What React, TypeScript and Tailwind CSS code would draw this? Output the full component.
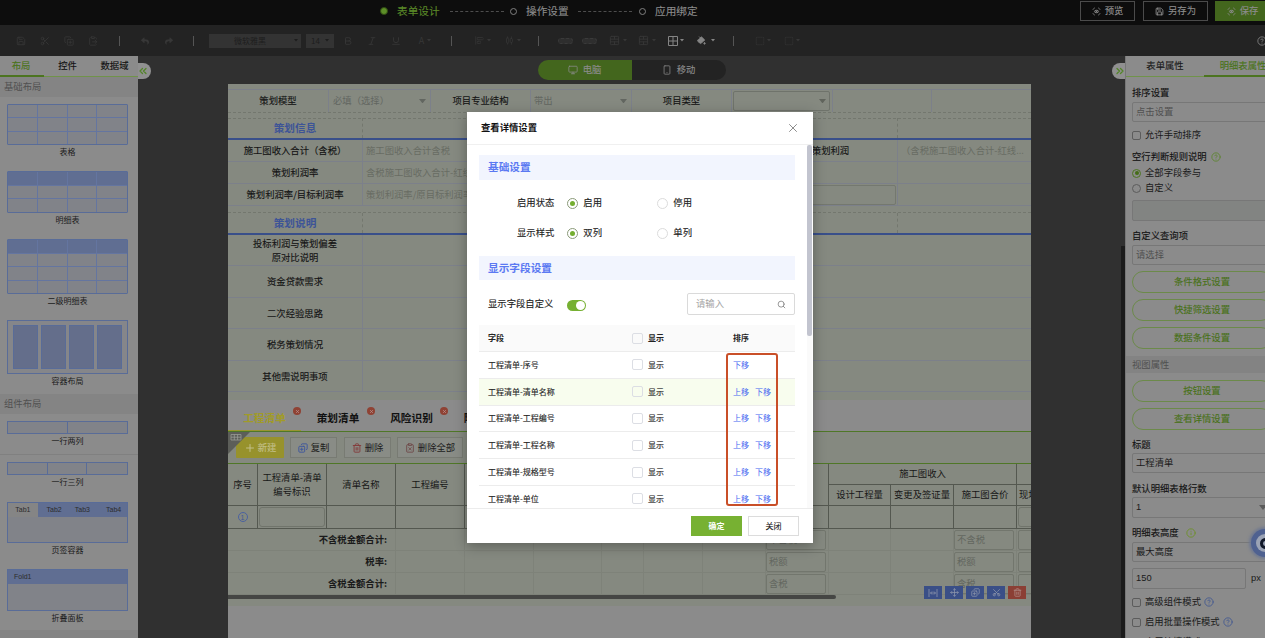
import type { ReactNode } from "react";
import {
  AlignStartVertical,
  AlignHorizontalDistributeCenter,
  Bold,
  CircleHelp,
  ClipboardPaste,
  ClipboardX,
  CopyPlus,
  Info,
  Italic,
  Monitor,
  Move,
  PaintBucket,
  Plus,
  Save,
  Scissors,
  Search,
  Smartphone,
  SquareDashed,
  TableCellsMerge,
  Trash2,
  Underline,
  X,
  ChevronsLeft,
  ChevronsRight,
} from "lucide-react";
import { FaReply, FaShare } from "react-icons/fa";

/* ---------- shared ---------- */

const Caret = ({ className = "" }: { className?: string }) => (
  <svg viewBox="0 0 8 5" className={className}>
    <path d="M0 0H8L4 5Z" fill="currentColor" />
  </svg>
);

const FocusEye = () => (
  <svg viewBox="0 0 10 10" className="size-[9px]" fill="none" stroke="currentColor" strokeWidth="1">
    <path d="M1 3A4.6 4.6 0 0 1 3 1M7 1A4.6 4.6 0 0 1 9 3M9 7A4.6 4.6 0 0 1 7 9M3 9A4.6 4.6 0 0 1 1 7" />
    <ellipse cx="5" cy="5" rx="2.3" ry="1.4" />
    <circle cx="5" cy="5" r=".6" fill="currentColor" />
  </svg>
);

const Strong = ({ children, className = "" }: { children: ReactNode; className?: string }) => (
  <span className={`[-webkit-text-stroke:0.12px_currentColor] ${className}`}>{children}</span>
);

/* ---------- header ---------- */

function Header() {
  return (
    <header className="flex h-[25px] shrink-0 items-start bg-[#0d0d0d] text-[10.67px] text-[#8c8c8c]">
      <div className="flex h-[22px] w-[1080px] items-center pl-[380px]">
        <i className="size-[8px] rounded-full border border-[#2f4a12] bg-[#5d8f28]" />
        <Strong className="ml-[9px] w-[43px] text-[#5b8a28]">表单设计</Strong>
        <i className="ml-[10px] w-[54px] border-t border-dashed border-[#4d4d4d]" />
        <i className="ml-[6px] size-[7px] rounded-full border border-[#808080]" />
        <Strong className="ml-[9px] w-[43px]">操作设置</Strong>
        <i className="ml-[9px] w-[54px] border-t border-dashed border-[#4d4d4d]" />
        <i className="ml-[7px] size-[7px] rounded-full border border-[#808080]" />
        <Strong className="ml-[9px] w-[43px]">应用绑定</Strong>
      </div>
      <div className="flex w-[185px] overflow-hidden pt-px text-[9.33px]">
        <div className="flex h-5 w-[55px] shrink-0 items-center justify-center gap-[4px] border border-[#4b4b4b]">
          <FocusEye />
          <Strong>预览</Strong>
        </div>
        <div className="ml-2 flex h-5 w-[65px] shrink-0 items-center justify-center gap-[4px] border border-[#4b4b4b]">
          <Save size={9} strokeWidth={2.4} />
          <Strong>另存为</Strong>
        </div>
        <div className="ml-[7px] flex h-5 w-[55px] shrink-0 items-center justify-center gap-[4px] bg-[#43661d]">
          <FocusEye />
          <Strong>保存</Strong>
        </div>
      </div>
    </header>
  );
}

const Slot = ({ children }: { children: ReactNode }) => (
  <div className="flex w-6 shrink-0 items-center justify-center gap-[3px]">{children}</div>
);
const Bar = ({ className }: { className: string }) => (
  <div className={`flex shrink-0 justify-center ${className}`}>
    <i className="h-[10px] w-px bg-[#555]" />
  </div>
);

function Toolbar() {
  return (
    <div className="flex h-[31px] shrink-0 items-center overflow-hidden bg-[#232323] pl-[9px] text-[#373737]">
      <Slot><Save size={10} /></Slot>
      <Slot><Scissors size={10} /></Slot>
      <Slot><CopyPlus size={10} /></Slot>
      <Slot><ClipboardPaste size={10} /></Slot>
      <Bar className="w-7" />
      <Slot><FaReply size={8} /></Slot>
      <Slot><FaShare size={8} /></Slot>
      <Bar className="w-6" />
      <div className="ml-1 flex h-[14px] w-[92px] shrink-0 items-center justify-center bg-[#333] text-[8px] text-[#1d1d1d]">
        <span className="w-[76px] text-center">微软雅黑</span>
        <Caret className="ml-[6px] w-1" />
      </div>
      <div className="ml-[5px] flex h-[14px] w-[28px] shrink-0 items-center justify-center gap-[5px] bg-[#333] text-[8px] text-[#1d1d1d]">
        14
        <Caret className="w-1" />
      </div>
      <div className="w-[2px]" />
      <Slot><Bold size={10} /></Slot>
      <Slot><Italic size={10} /></Slot>
      <Slot><Underline size={10} /></Slot>
      <Slot>
        <span className="ml-[10px] text-[9px]">A</span>
        <Caret className="w-1" />
      </Slot>
      <Bar className="w-[38px]" />
      <div className="w-[1px]" />
      <Slot><AlignStartVertical size={9} /><Caret className="w-1 shrink-0" /></Slot>
      <div className="w-[6px]" />
      <Slot><AlignHorizontalDistributeCenter size={9} /><Caret className="w-1 shrink-0" /></Slot>
      <Bar className="w-[26px]" />
      <div className="w-[2px]" />
      <Slot><i className="h-[6px] w-[15px] rounded-sm border border-dashed border-[#3a3a3a] bg-[#2e2e2e]" /></Slot>
      <Slot><i className="h-[6px] w-[15px] rounded-sm border border-dashed border-[#3a3a3a] bg-[#2e2e2e]" /></Slot>
      <div className="flex w-[26px] items-center justify-end gap-[3px]"><TableCellsMerge size={11} /><Caret className="w-1" /></div>
      <div className="flex w-[29px] items-center justify-end gap-[3px]"><TableCellsMerge size={11} /><Caret className="w-1" /></div>
      <div className="flex w-[28px] items-center justify-end gap-[2px] text-[#858585]">
        <svg viewBox="0 0 10 10" className="size-[10px]" fill="none" stroke="currentColor">
          <path d="M.5 .5H9.5V9.5H.5ZM5 .5V9.5M.5 5H9.5" />
        </svg>
        <Caret className="w-1" />
      </div>
      <div className="flex w-[31px] items-center justify-end gap-[5px] text-[#858585]">
        <PaintBucket size={9} fill="currentColor" />
        <Caret className="w-1" />
      </div>
      <Bar className="w-[36px]" />
      <div className="flex w-[20px] items-center justify-end gap-[2px]"><SquareDashed size={10} /><Caret className="w-1" /></div>
      <div className="flex w-[29px] items-center justify-end gap-[2px]"><SquareDashed size={10} /><Caret className="w-1" /></div>
      <CircleHelp size={10} className="ml-auto mr-[-2px] shrink-0 text-[#858585]" />
    </div>
  );
}

/* ---------- left palette ---------- */

function Grid({ head, rows }: { head: boolean; rows: string }) {
  const count = rows === "h-[55px]" ? 16 : 12;
  return (
    <div className={`grid w-[121px] grid-cols-4 rounded-[1px] border border-[#596c98] ${rows}`}>
      {Array.from({ length: count }, (_, i) => (
        <i
          key={i}
          className={`${i % 4 !== 3 ? "border-r" : ""} ${i < count - 4 ? "border-b" : ""} border-[#6475a0] ${
            head && i < 4 ? "bg-[#606e92]" : "bg-[#818389]"
          }`}
        />
      ))}
    </div>
  );
}

const PaletteItem = ({ label, children, className }: { label: string; children: ReactNode; className: string }) => (
  <div className={`flex shrink-0 flex-col items-center pr-[3px] ${className}`}>
    {children}
    <span className="mt-px h-[12px] text-[8px] leading-[12px] text-[#1b1b1b]">{label}</span>
  </div>
);

function Palette() {
  return (
    <aside className="flex w-[138px] shrink-0 flex-col overflow-hidden bg-[#8b8b8b]">
      <nav className="flex h-[21px] shrink-0 border-b border-[#70934a] text-[9.33px] text-[#111]">
        <div className="-mb-px flex w-[44px] items-center justify-center border-b-2 border-[#4c7420] pr-[2px] text-[#487318]">
          <Strong>布局</Strong>
        </div>
        <div className="flex w-[47px] items-center justify-center"><Strong>控件</Strong></div>
        <div className="flex w-[47px] items-center justify-center"><Strong>数据域</Strong></div>
      </nav>
      <h3 className="flex h-[20px] shrink-0 items-center bg-[#848484] pl-1 text-[9.33px] text-[#505050]">基础布局</h3>
      <PaletteItem label="表格" className="h-[68px] pt-[7px]"><Grid head={false} rows="h-[41px]" /></PaletteItem>
      <PaletteItem label="明细表" className="h-[67px] pt-[6px]"><Grid head rows="h-[42px]" /></PaletteItem>
      <PaletteItem label="二级明细表" className="h-[81px] pt-[7px]"><Grid head rows="h-[55px]" /></PaletteItem>
      <PaletteItem label="容器布局" className="h-[81px] pt-[7px]">
        <div className="flex h-[54px] w-[121px] items-center justify-between border border-[#596c98] bg-[#85868a] px-[5px]">
          {[0, 1, 2, 3].map((i) => (
            <i key={i} className="h-[44px] w-[25px] border border-[#596c98] bg-[#646e8b]" />
          ))}
        </div>
      </PaletteItem>
      <h3 className="flex h-[20px] shrink-0 items-center bg-[#848484] pl-1 text-[9.33px] text-[#505050]">组件布局</h3>
      <PaletteItem label="一行两列" className="h-[41px] border-b border-[#808080] pt-[7px]">
        <div className="grid h-[13px] w-[121px] grid-cols-2 divide-x divide-[#596c98] border border-[#596c98] bg-[#818389]"><i /><i /></div>
      </PaletteItem>
      <PaletteItem label="一行三列" className="h-[40px] pt-[7px]">
        <div className="grid h-[13px] w-[121px] grid-cols-3 divide-x divide-[#596c98] border border-[#596c98] bg-[#818389]"><i /><i /><i /></div>
      </PaletteItem>
      <PaletteItem label="页签容器" className="h-[67px] pt-[7px]">
        <div className="h-[41px] w-[121px] border border-[#596c98] bg-[#818389] font-['Liberation_Sans'] text-[7px] text-[#2c2c2c]">
          <div className="grid h-[14px] grid-cols-4 border-b border-[#596c98] text-center leading-[14px]">
            <span className="bg-[#858585]">Tab1</span>
            <span className="bg-[#606e92] pl-[3px]">Tab2</span>
            <span className="bg-[#606e92]">Tab3</span>
            <span className="bg-[#606e92] pl-[3px]">Tab4</span>
          </div>
        </div>
      </PaletteItem>
      <PaletteItem label="折叠面板" className="h-[68px] pt-[7px]">
        <div className="h-[42px] w-[121px] border border-[#596c98] bg-[#818389] font-['Liberation_Sans'] text-[7px] text-[#2c2c2c]">
          <div className="h-[14px] bg-[#606e92] pl-[6px] leading-[14px]">Fold1</div>
        </div>
      </PaletteItem>
      <div className="flex-1 bg-[#848484]" />
    </aside>
  );
}

/* ---------- form canvas ---------- */

const LINE = "border-[#7c808a]";
const SIX = "grid grid-cols-[135px_134px_134px_133px_134px_133px]";

function ModelRow() {
  const cell = `flex items-center border-r ${LINE}`;
  return (
    <div className="grid h-[22px] grid-cols-[101px_102px_100px_101px_100px_101px_99px_99px] text-[9.33px] text-[#141414]">
      <div className={`${cell} justify-center`}><Strong>策划模型</Strong></div>
      <div className={`${cell} pl-1 text-[#626660]`}>必填（选择）<Caret className="ml-auto mr-[4px] w-[7px]" /></div>
      <div className={`${cell} justify-center`}><Strong>项目专业结构</Strong></div>
      <div className={`${cell} pl-[3px] text-[#626660]`}>带出<Caret className="ml-auto mr-[4px] w-[7px]" /></div>
      <div className={`${cell} justify-center`}><Strong>项目类型</Strong></div>
      <div className={cell}>
        <div className="mx-px flex h-5 w-[97px] items-center justify-end rounded-[2px] border border-[#6f736b] pr-[3px] text-[#60645c]">
          <Caret className="w-[7px]" />
        </div>
      </div>
      <div className={cell} />
      <div />
    </div>
  );
}

const SectionRow = ({ title }: { title: string }) => (
  <div className={`${SIX} h-[22px] border-b-2 border-[#394f8a] text-[10.67px] font-bold text-[#3d5497]`}>
    <div className="flex items-center justify-center border-r border-dashed border-[#73776e]">{title}</div>
    <i /><i /><i />
    <i className="border-r border-dashed border-[#73776e]" />
    <i />
  </div>
);

function MetricRow({ label, hint, label2, hint2, boxed }: { label: string; hint: string; label2?: string; hint2?: string; boxed?: boolean }) {
  return (
    <div className={`${SIX} h-[22px] border-b text-[9.33px] ${LINE}`}>
      <div className={`flex items-center justify-center whitespace-nowrap border-r pt-px text-[#141414] ${LINE}`}>
        <Strong>{label}</Strong>
      </div>
      <div className="flex items-center overflow-hidden whitespace-nowrap pl-[3px] pt-px text-[#686c63]">{hint}</div>
      <i /><i />
      <div className={`flex items-center justify-center border-r pt-px text-[#141414] ${LINE}`}>
        {boxed ? <i className="h-5 w-[131px] rounded-[2px] border border-[#74786f]" /> : <Strong>{label2}</Strong>}
      </div>
      <div className="flex items-center whitespace-nowrap pl-[3px] pt-px text-[#686c63]">{hint2}</div>
    </div>
  );
}

const NoteRow = ({ lines, className }: { lines: string[]; className: string }) => (
  <div className={`${SIX} border-b text-[9.33px] leading-[13.3px] text-[#141414] ${LINE} ${className}`}>
    <div className={`flex flex-col items-center justify-center border-r pt-px ${LINE}`}>
      {lines.map((l) => <Strong key={l}>{l}</Strong>)}
    </div>
  </div>
);

function Tab({ label, active, className }: { label: string; active?: boolean; className: string }) {
  return (
    <div className={`relative flex h-[31px] shrink-0 items-center justify-center pt-[6px] text-[10.67px] font-bold ${active ? "border-b border-[#98952f] text-[#a19b28]" : "text-[#111]"} ${className}`}>
      {label}
      <i className="absolute right-0 top-[7px] flex size-[8px] items-center justify-center rounded-full bg-[#8f4234] text-[#b99]">
        <X size={5} strokeWidth={3} />
      </i>
    </div>
  );
}

const ActionButton = ({ icon, label, className }: { icon: ReactNode; label: string; className: string }) => (
  <div className={`flex h-[21px] shrink-0 items-center justify-center gap-[3px] border border-[#787b73] bg-[#898c86] text-[9.33px] text-[#1c1c1c] ${className}`}>
    {icon}
    {label}
  </div>
);

function SummaryRow({ label, hint }: { label: string; hint: string }) {
  const box = "flex h-5 shrink-0 items-center rounded-[2px] border border-[#72766d] pl-[2px] text-[9.33px] text-[#63675f]";
  return (
    <div className="grid h-[22px] grid-cols-[168px_69px_69px_68px_42px_59px_63px_63px_62px_63px_63px_14px] divide-x divide-[#7e8279] border-b border-[#7e8279]">
      <div className="flex items-center justify-end pr-[8px] text-[9.33px] font-bold text-[#1a1a1a]">{label}:</div>
      <i /><i /><i /><i /><i /><i />
      <div className="flex items-center"><div className={`${box} w-[60px]`}>{hint}</div></div>
      <i /><i />
      <div className="flex items-center"><div className={`${box} w-[60px]`}>{hint}</div></div>
      <div className="flex items-center overflow-hidden pl-px"><div className={`${box} w-[20px]`} /></div>
    </div>
  );
}

function DetailTable() {
  const c = "flex items-center justify-center border-r border-b border-[#545850] text-center whitespace-nowrap";
  return (
    <div className="grid h-[65px] grid-cols-[30px_69px_69px_69px_364px_62px_63px_63px_40px] grid-rows-[21px_21px_23px] overflow-hidden text-[9.33px] leading-[13.3px] text-[#171717]">
      <div className={`${c} row-span-2`}>序号</div>
      <div className={`${c} row-span-2`}>工程清单-清单<br />编号标识</div>
      <div className={`${c} row-span-2`}>清单名称</div>
      <div className={`${c} row-span-2`}>工程编号</div>
      <div className={`${c} row-span-2`} />
      <div className={`${c} col-span-3`}>施工图收入</div>
      <div className={c} />
      <div className={c}>设计工程量</div>
      <div className={c}>变更及签证量</div>
      <div className={c}>施工图合价</div>
      <div className={`${c} !justify-start pl-[2px]`}>现场签证</div>
      <div className={c}>
        <span className="flex size-[10px] items-center justify-center rounded-full border border-[#4b62a0] font-['Liberation_Sans'] text-[7px] leading-none text-[#3f5798]">1</span>
      </div>
      <div className={`${c} p-px`}><i className="h-[20px] w-full rounded-[3px] border border-[#70746b]" /></div>
      <div className={c} /><div className={c} /><div className={c} /><div className={c} /><div className={c} /><div className={c} />
      <div className={`${c} p-px`}><i className="h-[20px] w-full rounded-[3px] border border-[#70746b]" /></div>
    </div>
  );
}

function Canvas() {
  return (
    <div className="relative ml-[90px] flex h-[554px] w-[803px] flex-col overflow-hidden bg-[#8b8b8b]">
      <div className="h-[316px] shrink-0 bg-[#858980]">
        <div className={`h-[6px] border-b ${LINE}`} />
        <ModelRow />
        <div className="h-[7px] border-y border-dashed border-[#73776e]" />
        <div className="-mt-px"><SectionRow title="策划信息" /></div>
        <MetricRow label="施工图收入合计（含税）" hint="施工图收入合计含税" label2="策划利润" hint2="（含税施工图收入合计-红线..." />
        <MetricRow label="策划利润率" hint="含税施工图收入合计-红线成本" />
        <MetricRow label="策划利润率/目标利润率" hint="策划利润率/原目标利润率" boxed />
        <div className="mt-[1px] h-[6px] border-b border-dashed border-[#73776e]" />
        <SectionRow title="策划说明" />
        <NoteRow className="h-[31px]" lines={["投标利润与策划偏差", "原对比说明"]} />
        <NoteRow className="h-[32px]" lines={["资金贷款需求"]} />
        <NoteRow className="h-[31px]" lines={["二次经验思路"]} />
        <NoteRow className="h-[32px]" lines={["税务策划情况"]} />
        <NoteRow className="h-[31px]" lines={["其他需说明事项"]} />
      </div>
      <div className="flex h-[31px] shrink-0">
        <Tab label="工程清单" active className="w-[73px]" />
        <Tab label="策划清单" className="w-[74px]" />
        <Tab label="风险识别" className="w-[73px]" />
        <Tab label="附件清单" className="w-[74px]" />
      </div>
      <div className="relative flex h-[33px] shrink-0 items-center border-y border-[#4f7727] bg-[#858980] pl-2">
        <svg viewBox="0 0 22 22" className="absolute left-0 top-0 size-[22px]">
          <path d="M0 0H22L0 22Z" fill="#5c5e59" />
          <path d="M3 2.5H13V8H3ZM3 5.2H13M6.3 2.5V8M9.6 2.5V8" fill="none" stroke="#999c96" strokeWidth=".8" />
        </svg>
        <div className="flex h-[21px] w-[48px] items-center justify-center gap-[2px] rounded-[1px] bg-[#97922c] text-[9.33px] text-[#c2bf88]">
          <Plus size={12} strokeWidth={2} />
          <Strong>新建</Strong>
        </div>
        <ActionButton className="ml-[6px] w-[47px]" label="复制" icon={<CopyPlus size={10} strokeWidth={2.3} className="-scale-x-100 text-[#40589d]" />} />
        <ActionButton className="ml-[7px] w-[47px]" label="删除" icon={<Trash2 size={10} strokeWidth={2.3} className="text-[#853d3d]" />} />
        <ActionButton className="ml-[6px] w-[66px]" label="删除全部" icon={<ClipboardX size={10} className="text-[#6d4444]" />} />
      </div>
      <div className="relative h-[142px] shrink-0 bg-[#858980]">
        <DetailTable />
        <SummaryRow label="不含税金额合计" hint="不含税" />
        <SummaryRow label="税率" hint="税额" />
        <SummaryRow label="含税金额合计" hint="含税" />
        <div className="h-1 w-[608px] rounded-r-full bg-[#454644]" />
        <div className="absolute right-[5px] top-[122px] flex gap-[3px] text-[#8d95ab]">
          <span className="flex h-[13px] w-[18px] items-center justify-center bg-[#3a4f87]">
            <svg viewBox="0 0 10 8" className="w-[10px]" fill="none" stroke="currentColor"><path d="M1 0V8M9 0V8M2.5 4H7.5M4 2.5L2.5 4L4 5.5M6 2.5L7.5 4L6 5.5" strokeWidth=".8" /></svg>
          </span>
          <span className="flex h-[13px] w-[18px] items-center justify-center bg-[#3a4f87]"><Move size={9} /></span>
          <span className="flex h-[13px] w-[18px] items-center justify-center bg-[#3a4f87]"><CopyPlus size={9} className="-scale-x-100" /></span>
          <span className="flex h-[13px] w-[18px] items-center justify-center bg-[#3a4f87]"><Scissors size={9} className="-rotate-90" /></span>
          <span className="flex h-[13px] w-[18px] items-center justify-center bg-[#8b3f35] text-[#b08e88]"><Trash2 size={9} /></span>
        </div>
      </div>
    </div>
  );
}

function Workspace() {
  return (
    <main className="relative flex w-[987px] shrink-0 flex-col bg-[#303030]">
      <div className="absolute left-0 top-[7px] flex h-4 w-[13px] items-center justify-center rounded-r-full bg-[#909090] text-[#54852a]">
        <ChevronsLeft size={12} strokeWidth={2.6} className="mr-[3px] shrink-0" />
      </div>
      <div className="absolute right-0 top-[7px] flex h-4 w-[13px] items-center justify-center rounded-l-full bg-[#909090] text-[#54852a]">
        <ChevronsRight size={12} strokeWidth={2.6} className="ml-[3px] shrink-0" />
      </div>
      <div className="absolute right-0 top-[190px] h-[392px] w-1 bg-[#1b1b1b]" />
      <div className="flex h-[28px] shrink-0 justify-center pt-[4px] text-[9.33px] text-[#8c8c8c]">
        <div className="flex h-5 w-[94px] items-center justify-center gap-[5px] rounded-l-full bg-[#43661d]">
          <Monitor size={10} strokeWidth={1.8} />
          <Strong>电脑</Strong>
        </div>
        <div className="flex h-5 w-[94px] items-center justify-center gap-[5px] rounded-r-full bg-[#232323]">
          <Smartphone size={10} strokeWidth={1.8} />
          <Strong>移动</Strong>
        </div>
      </div>
      <Canvas />
    </main>
  );
}

/* ---------- right properties ---------- */

const Title = ({ children, className }: { children: ReactNode; className: string }) => (
  <div className={`flex shrink-0 items-center gap-1 text-[#121212] ${className}`}>{children}</div>
);
const Field = ({ children, className }: { children?: ReactNode; className: string }) => (
  <div className={`flex shrink-0 items-center rounded-[2px] border border-[#777] pl-[3px] ${className}`}>{children}</div>
);
const PillButton = ({ children, className }: { children: ReactNode; className: string }) => (
  <div className={`flex h-[22px] w-[140px] shrink-0 items-center justify-center rounded-full border border-[#6c8a4a] text-[#487118] ${className}`}>
    <Strong>{children}</Strong>
  </div>
);
const CheckRow = ({ children, className }: { children: ReactNode; className: string }) => (
  <div className={`flex h-[14px] items-center gap-[3px] ${className}`}>
    <i className="mr-px size-[9px] rounded-[2px] border border-[#5c5c5c]" />
    {children}
  </div>
);

function Properties() {
  return (
    <aside className="relative w-[140px] shrink-0 overflow-hidden border-l border-[#777] bg-[#8b8b8b]">
      <div className="flex w-[160px] flex-col text-[9.33px] text-[#1a1a1a]">
        <nav className="flex h-[21px] shrink-0 border-b border-[#70934a]">
          <div className="flex w-[78px] items-center justify-center"><Strong>表单属性</Strong></div>
          <div className="-mb-px flex w-[78px] items-center justify-center border-b-2 border-[#4c7420] text-[#487318]"><Strong>明细表属性</Strong></div>
        </nav>
        <div className="flex flex-col pl-[6px]">
          <Title className="mt-[9px] h-[14px]"><Strong>排序设置</Strong></Title>
          <Field className="mt-[2px] h-5 w-[140px] text-[#505050]">点击设置</Field>
          <CheckRow className="mt-[6px]">允许手动排序</CheckRow>
          <Title className="mt-[8px] h-[14px]"><Strong>空行判断规则说明</Strong><CircleHelp size={10} strokeWidth={2.2} className="text-[#5f8533]" /></Title>
          <div className="mt-[2px] flex h-[14px] items-center gap-[4px]">
            <i className="flex size-[9px] items-center justify-center rounded-full border border-[#4d7522]"><i className="size-[4px] rounded-full bg-[#456d18]" /></i>
            全部字段参与
          </div>
          <div className="mt-[1px] flex h-[14px] items-center gap-[4px]"><i className="size-[9px] rounded-full border border-[#5c5c5c]" />自定义</div>
          <Field className="mt-[5px] h-[21px] w-[140px] bg-[#828482]" />
          <Title className="mt-[8px] h-[14px]"><Strong>自定义查询项</Strong></Title>
          <Field className="mt-[2px] h-5 w-[140px] text-[#505050]">请选择</Field>
          <PillButton className="mt-[6px]">条件格式设置</PillButton>
          <PillButton className="mt-[6px]">快捷筛选设置</PillButton>
          <PillButton className="mt-[6px]">数据条件设置</PillButton>
        </div>
        <h3 className="mt-[7px] flex h-[17px] items-center bg-[#838383] pl-[6px] text-[#505050]">视图属性</h3>
        <div className="flex flex-col pl-[6px]">
          <PillButton className="mt-[7px]">按钮设置</PillButton>
          <PillButton className="mt-[6px]">查看详情设置</PillButton>
          <Title className="mt-[8px] h-[14px]"><Strong>标题</Strong></Title>
          <Field className="mt-[1px] h-[20px] w-[140px]">工程清单</Field>
          <Title className="mt-[9px] h-[14px]"><Strong>默认明细表格行数</Strong></Title>
          <Field className="mt-[1px] h-[21px] w-[140px] font-['Liberation_Sans']">1<Caret className="ml-auto mr-[4px] w-2 text-[#5b5b5b]" /></Field>
          <Title className="mt-[8px] h-[14px]"><Strong>明细表高度</Strong><Info size={10} strokeWidth={2.2} className="ml-[3px] text-[#6f902c]" /></Title>
          <Field className="mt-[2px] h-[20px] w-[140px]">最大高度</Field>
          <div className="mt-[6px] flex items-center gap-[5px] font-['Liberation_Sans']"><Field className="h-[21px] w-[114px]">150</Field>px</div>
          <CheckRow className="mt-[6px]">高级组件模式<CircleHelp size={10} strokeWidth={2.2} className="text-[#465b90]" /></CheckRow>
          <CheckRow className="mt-[6px]">启用批量操作模式<CircleHelp size={10} strokeWidth={2.2} className="text-[#465b90]" /></CheckRow>
          <CheckRow className="mt-[6px]">启用快捷模式</CheckRow>
        </div>
      </div>
      <div className="absolute -right-[14px] top-[473px] flex size-7 items-center justify-center rounded-full bg-[#4f6190] shadow-[0_0_3px_2px_#6e7891]">
        <div className="flex size-[18px] items-center justify-center rounded-full bg-[#9ba3b5]">
          <i className="size-[11px] rounded-full border-[3px] border-[#111829] bg-[#9ba3b5]" />
        </div>
      </div>
    </aside>
  );
}

/* ---------- dialog ---------- */

const DialogRadio = ({ label, on }: { label: string; on?: boolean }) => (
  <div className="flex w-[90px] items-center">
    <i className={`flex size-[11px] items-center justify-center rounded-full border ${on ? "border-[#8a9a78]" : "border-[#dcdcdc]"}`}>
      {on && <i className="size-[5px] rounded-full bg-[#74ae30]" />}
    </i>
    <span className="ml-[5px]"><Strong>{label}</Strong></span>
  </div>
);

const Box = () => <i className="size-[11px] rounded-[2px] border border-[#dcdee4]" />;

const fields = ["序号", "清单名称", "工程编号", "工程名称", "规格型号", "单位"];

function Dialog() {
  return (
    <div className="absolute left-[467px] top-[112px] flex h-[431px] w-[346px] flex-col bg-white text-[9.33px] text-[#222] shadow-[0_3px_12px_rgba(0,0,0,0.3)]">
      <div className="flex h-[33px] shrink-0 items-center justify-between border-b border-[#f0f0f0] pl-[14px] pr-[13px] text-[#111]">
        <b>查看详情设置</b>
        <X size={14} strokeWidth={1.7} className="text-[#8c8c8c]" />
      </div>
      <div className="flex h-[363px] shrink-0 overflow-hidden">
        <div className="flex w-[340px] shrink-0 flex-col pl-3 pr-[12px]">
          <h4 className="mt-[10px] flex h-[25px] shrink-0 items-center bg-[#f2f5fe] pl-[9px] text-[10.67px] font-bold text-[#5b79f2]">基础设置</h4>
          <div className="mt-[15px] flex h-[16px] shrink-0 items-center pl-[38px]">
            <span className="mr-[13px]"><Strong>启用状态</Strong></span>
            <DialogRadio label="启用" on /><DialogRadio label="停用" />
          </div>
          <div className="mt-[14px] flex h-[16px] shrink-0 items-center pl-[38px]">
            <span className="mr-[13px]"><Strong>显示样式</Strong></span>
            <DialogRadio label="双列" on /><DialogRadio label="单列" />
          </div>
          <h4 className="mt-[15px] flex h-[24px] shrink-0 items-center bg-[#f2f5fe] pl-[9px] text-[10.67px] font-bold text-[#5b79f2]">显示字段设置</h4>
          <div className="mt-[13px] flex h-[22px] shrink-0 items-center pl-[9px]">
            <span className="w-[66px]"><Strong>显示字段自定义</Strong></span>
            <span className="ml-[13px] mt-[2px] flex h-[11px] w-[19px] items-center justify-end rounded-full bg-[#76b032] pr-px">
              <i className="size-[9px] rounded-full bg-white" />
            </span>
            <div className="ml-auto flex h-[22px] w-[108px] items-center justify-between rounded-[2px] border border-[#dadada] px-2 text-[#a5a5a5]">
              请输入
              <Search size={9} strokeWidth={2} className="text-[#777]" />
            </div>
          </div>
          <div className="mt-[10px] text-[8px]">
            <div className="grid h-[27px] grid-cols-[153px_101px_62px] items-center border-b border-[#ececec] bg-[#fafafa] font-bold">
              <span className="pl-[9px]">字段</span>
              <span className="flex items-center gap-[5px]"><Box />显示</span>
              <span>排序</span>
            </div>
            {fields.map((f, i) => (
              <div key={f} className={`grid h-[26.8px] grid-cols-[153px_101px_62px] items-center border-b border-[#ececec] ${i === 1 ? "bg-[#f8fdee]" : ""}`}>
                <span className="pl-[9px]"><Strong>工程清单-{f}</Strong></span>
                <span className="flex items-center gap-[5px]"><Box /><Strong>显示</Strong></span>
                <span className="flex gap-[6px] text-[#4668f0]">
                  {i > 0 && <span>上移</span>}
                  <span>下移</span>
                </span>
              </div>
            ))}
          </div>
        </div>
        <div className="w-[5px] bg-[#fafafa]"><i className="block h-[191px] rounded-[2px] bg-[#c2c4cf]" /></div>
      </div>
      <div className="flex flex-1 items-center justify-end gap-[6px] border-t border-[#ececec] pb-px pr-[14px] text-[8px]">
        <div className="flex h-5 w-[51px] items-center justify-center bg-[#77b132] font-bold text-white">确定</div>
        <div className="flex h-5 w-[51px] items-center justify-center border border-[#dcdcdc]"><Strong>关闭</Strong></div>
      </div>
      <div className="absolute left-[259px] top-[241px] h-[153px] w-[52px] rounded-[3px] border-2 border-[#c94f28]" />
    </div>
  );
}

export default function App() {
  return (
    <div className="relative flex h-[638px] w-[1265px] flex-col overflow-hidden font-['Noto_Sans_CJK_SC',sans-serif] leading-none">
      <Header />
      <Toolbar />
      <div className="flex h-[582px] shrink-0">
        <Palette />
        <Workspace />
        <Properties />
      </div>
      <Dialog />
    </div>
  );
}
